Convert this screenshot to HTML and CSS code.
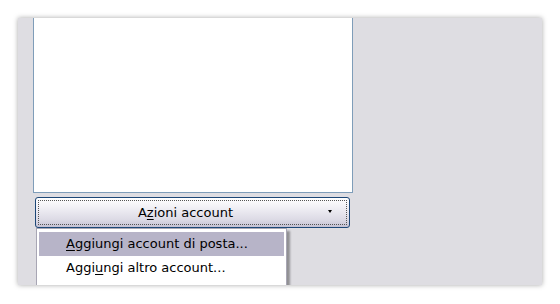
FILE: index.html
```html
<!DOCTYPE html>
<html>
<head>
<meta charset="utf-8">
<link rel="stylesheet" href="styles.css">
</head>
<body>
<div class="frame">
  <div class="column">
    <div class="listbox"></div>
    <div class="button">
      <span class="focus">
        <span class="label">A<u>z</u>ioni account</span>
        <span class="arrow"></span>
      </span>
    </div>
  </div>
  <div class="menu">
    <div class="item selected"><u>A</u>ggiungi account di posta...</div>
    <div class="item">Aggi<u>u</u>ngi altro account...</div>
  </div>
</div>
</body>
</html>
```
FILE: styles.css
```css
html, body {
  margin: 0;
  padding: 0;
  background: #ffffff;
}
body {
  width: 560px;
  height: 304px;
  overflow: hidden;
  font-family: "DejaVu Sans", Tahoma, sans-serif;
  font-size: 13px;
  color: #000;
}
.frame {
  position: relative;
  margin: 18px 0 0 18px;
  width: 524px;
  height: 267px;
  background: #dedde2;
  box-shadow: 0 0 5px rgba(0, 0, 0, 0.35);
  overflow: hidden;
}
.column {
  display: flex;
  flex-direction: column;
  width: 320px;
  margin-left: 15px;
}
.listbox {
  height: 174px;
  background: #ffffff;
  border: 1px solid #7f9db9;
  border-top: none;
}
.button {
  margin: 4px 3px 0 2px;
  border: 1px solid #1d4777;
  border-radius: 3px;
  background: linear-gradient(#ffffff 0%, #f2f1f6 30%, #dcdae5 75%, #c4c1d3 100%);
  padding: 2px;
  box-sizing: border-box;
  height: 31px;
}
.focus {
  display: flex;
  align-items: center;
  height: 100%;
  box-sizing: border-box;
  border: 1px dotted #555;
}
.label {
  flex: 1;
  text-align: center;
  padding-left: 4px;
}
.arrow {
  width: 0;
  height: 0;
  border-left: 2.5px solid transparent;
  border-right: 2.5px solid transparent;
  border-top: 3px solid #000;
  margin-right: 14px;
  margin-bottom: 2px;
}
.menu {
  position: absolute;
  left: 18px;
  top: 210px;
  width: 245px;
  height: 70px;
  background: #ffffff;
  border: 1px solid #a8a6b4;
  padding: 3px 2px 2px 2px;
  box-shadow: 3px 3px 2px rgba(0, 0, 0, 0.35);
}
.item {
  height: 24px;
  line-height: 24px;
  padding-left: 27px;
}
.item.selected {
  background: #b7b4c8;
}
u {
  text-decoration: underline;
  text-underline-offset: 2px;
}
```
